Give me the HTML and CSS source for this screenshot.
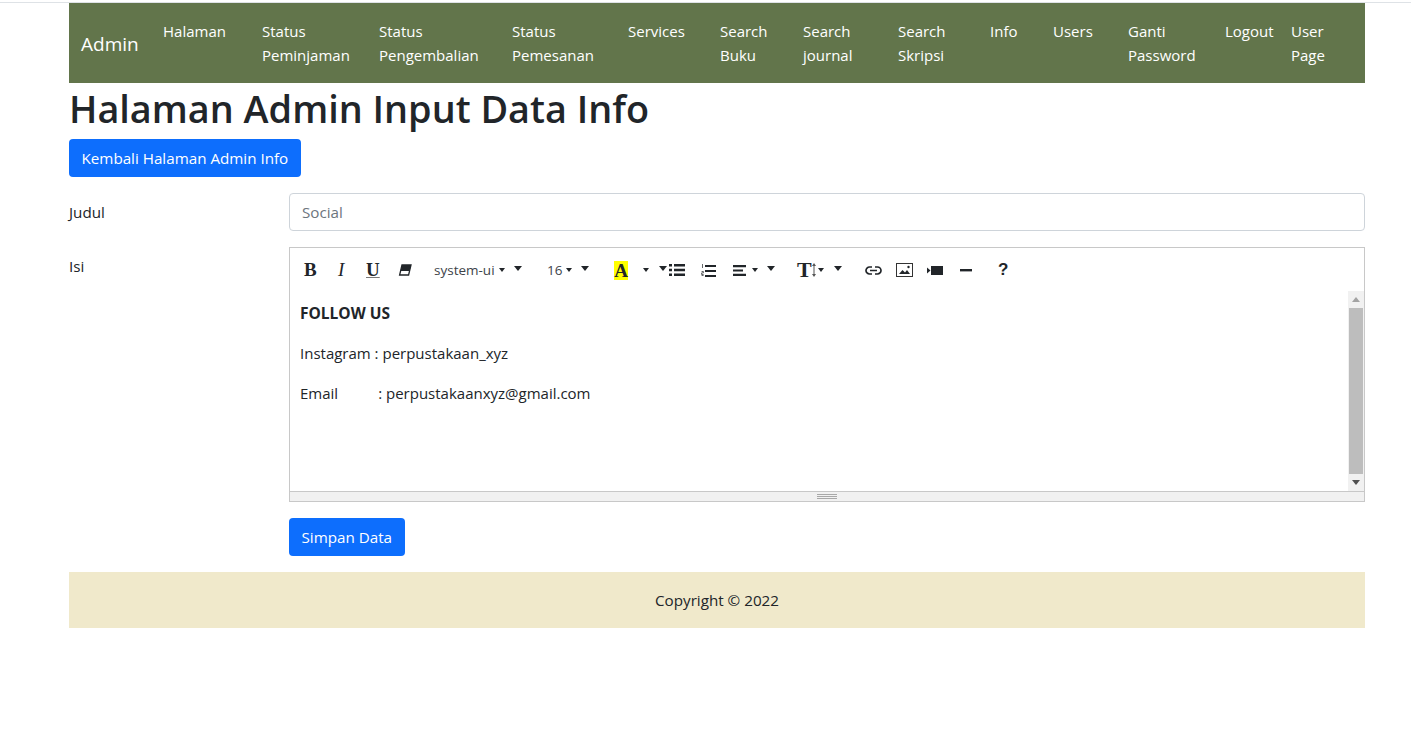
FILE: index.html
```html
<!DOCTYPE html>
<html lang="id">
<head>
  <meta charset="UTF-8" />
  <title>Halaman Admin Input Data Info</title>
  <link rel="stylesheet" href="styles.css">
</head>
<body>

<div class="topline"></div>

<div class="container">
  <nav class="navbar">
    <a class="brand" href="#">Admin</a>
    <a class="nav-link" href="#">Halaman</a>
    <a class="nav-link" href="#">Status<br>Peminjaman</a>
    <a class="nav-link" href="#">Status<br>Pengembalian</a>
    <a class="nav-link" href="#">Status<br>Pemesanan</a>
    <a class="nav-link" href="#">Services</a>
    <a class="nav-link" href="#">Search<br>Buku</a>
    <a class="nav-link" href="#">Search<br>journal</a>
    <a class="nav-link" href="#">Search<br>Skripsi</a>
    <a class="nav-link" href="#">Info</a>
    <a class="nav-link" href="#">Users</a>
    <a class="nav-link" href="#">Ganti<br>Password</a>
    <a class="nav-link" href="#">Logout</a>
    <a class="nav-link" href="#">User<br>Page</a>
  </nav>

  <h1>Halaman Admin Input Data Info</h1>
  <a class="btn btn-back" href="#">Kembali Halaman Admin Info</a>

  <div class="row">
    <label for="judul">Judul</label>
    <input type="text" id="judul" class="form-control" placeholder="Social">
  </div>

  <div class="row">
    <label class="label-isi">Isi</label>
    <div class="editor">
      <div class="toolbar">
        <span class="tool t-b glyph">B</span>
        <span class="tool t-i glyph">I</span>
        <span class="tool t-u glyph">U</span>
        <span class="tool t-eraser">
          <svg width="14" height="12" viewBox="0 0 14 12"><path d="M4 1h9l-2.400 10H1.600z" fill="#fff" stroke="#212529" stroke-width="1.300"/><path d="M4 1h9l-1.400 6H2.500z" fill="#212529"/></svg>
        </span>
        <span class="tool t-font">system-ui<i class="caret small"></i><i class="caret"></i></span>
        <span class="tool t-size">16<i class="caret small"></i><i class="caret"></i></span>
        <span class="tool t-color"><b class="glyph hl">A</b><i class="caret small"></i><i class="caret"></i></span>
        <span class="tool t-ul">
          <svg width="16" height="12" viewBox="0 0 16 12"><path d="M0 0h3v2.400H0zM0 4.800h3v2.400H0zM0 9.600h3V12H0zM5 0h11v2.400H5zM5 4.800h11v2.400H5zM5 9.600h11V12H5z" fill="#212529"/></svg>
        </span>
        <span class="tool t-ol">
          <svg width="15" height="13" viewBox="0 0 15 13"><path d="M4 1h11v2H4zM4 6h11v2H4zM4 11h11v2H4z" fill="#212529"/><path d="M1.500 0v4M.6 7.500h1.800v1.400H.6v1.600h2M.6 11.500h2" fill="none" stroke="#212529" stroke-width=".7"/></svg>
        </span>
        <span class="tool t-align">
          <svg width="13" height="11" viewBox="0 0 13 11"><path d="M0 0h13v2.200H0zM0 4.400h10v2.200H0zM0 8.800h13V11H0z" fill="#212529"/></svg>
          <i class="caret small"></i><i class="caret"></i>
        </span>
        <span class="tool t-height"><b class="glyph tt">T</b><svg width="4" height="14" viewBox="0 0 4 14"><path d="M2 0l2 3H2.500v8H4l-2 3-2-3h1.500V3H0z" fill="#555"/></svg><i class="caret small"></i><i class="caret"></i></span>
        <span class="tool t-link">
          <svg width="17" height="9" viewBox="0 0 17 9"><path d="M7 1H4.500a3.500 3.500 0 0 0 0 7H7M10 1h2.500a3.500 3.500 0 0 1 0 7H10M5 4.500h7" fill="none" stroke="#212529" stroke-width="1.700"/></svg>
        </span>
        <span class="tool t-pic">
          <svg width="17" height="14" viewBox="0 0 17 14"><rect x=".5" y=".5" width="16" height="13" fill="#fff" stroke="#333"/><path d="M3 11l3.500-4 2.500 2.500L11 7l3 4z" fill="#212529"/><circle cx="12.500" cy="4" r="1.200" fill="#212529"/></svg>
        </span>
        <span class="tool t-video">
          <svg width="16" height="9" viewBox="0 0 16 9"><path d="M0 1.500l3.500 3-3.500 3z" fill="#212529"/><rect x="4" y="0" width="12" height="9" fill="#212529"/></svg>
        </span>
        <span class="tool t-hr">
          <svg width="12" height="3" viewBox="0 0 12 3"><rect width="12" height="2.400" fill="#212529"/></svg>
        </span>
        <span class="tool t-help glyph">?</span>
      </div>

      <div class="editable">
        <div class="content">
          <p><b>FOLLOW US</b></p>
          <p>Instagram : perpustakaan_xyz</p>
          <p>Email<span class="tab"></span>: perpustakaanxyz@gmail.com</p>
        </div>
        <div class="scrollbar">
          <i class="arrow-up"></i>
          <div class="thumb"></div>
          <i class="arrow-down"></i>
        </div>
      </div>

      <div class="statusbar"><div class="grip"></div></div>
    </div>
  </div>

  <div class="row row-save">
    <a class="btn" href="#">Simpan Data</a>
  </div>

  <footer class="footer">Copyright &copy; 2022</footer>
</div>

</body>
</html>
```

FILE: styles.css
```css
body {
  margin: 0;
  background-color: #fff;
  color: #212529;
  font-family: 'Open Sans', 'Noto Sans', sans-serif;
  font-size: 15.2px;
  line-height: 24px;
}

.topline {
  height: 2px;
  border-bottom: 1px solid #dee2e6;
}

.container {
  width: 1296px;
  margin-left: 69px;
}

/* navbar */
.navbar {
  display: grid;
  grid-template-columns: 82px 99px 117px 133px 116px 92px 83px 95px 92px 63px 75px 97px 66px 74px;
  align-items: start;
  height: 80px;
  padding: 8px 0 8px 12px;
  box-sizing: border-box;
  background-color: #62754b;
  font-size: 15px;
}

.brand {
  padding-top: 18px;
  color: #fff;
  font-size: 19px;
  line-height: 30px;
  text-decoration: none;
}

.nav-link {
  padding: 8px 0;
  color: #fff;
  text-decoration: none;
  white-space: nowrap;
}

h1 {
  margin: 0 0 6px;
  padding-top: 2px;
  font-size: 37.8px;
  font-weight: 600;
  line-height: 48px;
}

.btn {
  display: inline-block;
  padding: 7px 12.5px;
  border-radius: 4px;
  background-color: #0d6efd;
  color: #fff;
  text-decoration: none;
}

.row {
  display: flex;
  margin-top: 16px;
}

.row label {
  flex: 0 0 220px;
  padding-top: 7px;
}

.form-control {
  flex: 1;
  height: 38px;
  box-sizing: border-box;
  padding: 6px 12px;
  border: 1px solid #ced4da;
  border-radius: 4px;
  font: inherit;
}

.form-control::placeholder {
  color: #6c757d;
}

/* editor */
.editor {
  flex: 1;
  height: 255px;
  box-sizing: border-box;
  border: 1px solid #c8c8c8;
  display: flex;
  flex-direction: column;
}

.toolbar {
  display: flex;
  align-items: center;
  height: 43px;
  flex: none;
  padding-top: 1px;
  box-sizing: border-box;
  font-size: 13.5px;
}

.tool {
  display: flex;
  align-items: center;
  flex: none;
  box-sizing: border-box;
}

.glyph {
  font-family: 'Liberation Serif', serif;
  font-weight: bold;
  font-size: 19px;
}

.t-b { width: 32px; padding-left: 14px; }
.t-i { width: 30px; padding-left: 16px; font-style: italic; font-weight: normal; }
.t-u { width: 32px; padding-left: 14px; text-decoration: underline; text-decoration-color: #777; }
.t-eraser { width: 50px; padding-left: 14px; }
.t-font { width: 113px; color: #3d4349; }
.t-size { width: 66px; color: #3d4349; }
.t-color { width: 56px; padding-left: 1px; }
.t-ul { width: 32px; }
.t-ol { width: 32px; }
.t-align { width: 64px; }
.t-height { width: 68px; }
.t-link { width: 31px; }
.t-pic { width: 31px; }
.t-video { width: 33px; }
.t-hr { width: 38px; }
.t-help { font-family: 'Liberation Sans', sans-serif; font-size: 17px; }

.caret {
  display: inline-block;
  flex: none;
  width: 0;
  height: 0;
  margin-left: 9px;
  margin-top: -3px;
  border-left: 4.5px solid transparent;
  border-right: 4.5px solid transparent;
  border-top: 5px solid #212529;
}

.caret.small {
  margin-left: 4px;
  margin-top: 0;
  border-left-width: 3.5px;
  border-right-width: 3.5px;
  border-top-width: 4px;
}

.hl {
  display: inline-block;
  flex: none;
  width: 14px;
  height: 19px;
  line-height: 20px;
  text-align: center;
  font-size: 19px;
  background-color: #ff0;
}

.t-color .caret.small { margin-left: 15px; }
.t-color .caret { margin-left: 10px; }
.t-align .caret.small { margin-left: 6px; }
.t-height .caret.small { margin-left: 2px; }
.t-height .caret { margin-left: 10px; }
.tt { font-size: 22px; line-height: 20px; }

.editable {
  flex: 1;
  display: flex;
  min-height: 0;
}

.content {
  flex: 1;
  padding: 10px 10px 0;
  font-size: 15px;
}

.content p {
  margin: 0 0 16px;
}

.content b {
  font-size: 15.5px;
}

.tab {
  display: inline-block;
  width: 40px;
}

.scrollbar {
  flex: none;
  width: 16px;
  display: flex;
  flex-direction: column;
  align-items: center;
  background-color: #f1f1f1;
}

.thumb {
  width: 14px;
  flex: 1;
  background-color: #bdbdbd;
}

.arrow-up,
.arrow-down {
  flex: none;
  width: 0;
  height: 0;
  margin: 6px 0;
  border-left: 4px solid transparent;
  border-right: 4px solid transparent;
}

.arrow-up { border-bottom: 5px solid #a3a3a3; }
.arrow-down { border-top: 5px solid #505050; }

.statusbar {
  flex: none;
  height: 10px;
  box-sizing: border-box;
  display: flex;
  justify-content: center;
  padding-top: 2px;
  border-top: 1px solid #c8c8c8;
  background-color: #f1f1f1;
}

.grip {
  width: 20px;
  height: 5px;
  border-top: 1px solid #a8a8a8;
  border-bottom: 1px solid #a8a8a8;
  box-sizing: border-box;
  background: linear-gradient(#a8a8a8, #a8a8a8) center / 100% 1px no-repeat;
}

.row-save {
  padding-left: 220px;
}

.footer {
  margin-top: 16px;
  padding: 16px;
  background-color: #f0e9cb;
  text-align: center;
}
```
